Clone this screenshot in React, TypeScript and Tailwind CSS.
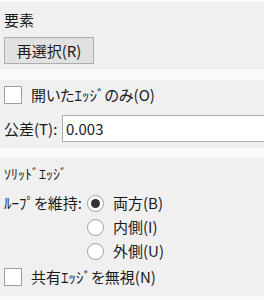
import React, { useState } from 'react';

const font = "font-['Yu_Gothic_UI','Noto_Sans_CJK_JP',sans-serif] [font-feature-settings:'palt']";

function CheckBox({ label, checked, onToggle }: { label: string; checked: boolean; onToggle: () => void }) {
  return (
    <label className="flex h-[20px] items-center cursor-default" onClick={onToggle}>
      <span className="ml-[4px] flex h-[18px] w-[18px] items-center justify-center border border-[#a0a0a0] bg-white">
        {checked && (
          <svg width="12" height="12" viewBox="0 0 12 12">
            <path d="M2 6.5l2.5 2.5L10 3" fill="none" stroke="#333" strokeWidth="1.6" />
          </svg>
        )}
      </span>
      <span className="ml-[9px] whitespace-nowrap text-[15px] leading-[20px] text-[#1a1a1a]">{label}</span>
    </label>
  );
}

function Radio({ label, selected, onSelect }: { label: string; selected: boolean; onSelect: () => void }) {
  return (
    <div className="flex h-[24px] items-center cursor-default" onClick={onSelect}>
      <span className="flex h-[17px] w-[17px] items-center justify-center rounded-full border border-[#a0a0a0] bg-white">
        {selected && <span className="h-[9px] w-[9px] rounded-full bg-[#333333]" />}
      </span>
      <span className="ml-[9px] whitespace-nowrap text-[15px] leading-[20px] text-[#1a1a1a]">{label}</span>
    </div>
  );
}

export default function App() {
  const [openOnly, setOpenOnly] = useState(false);
  const [ignoreShared, setIgnoreShared] = useState(false);
  const [loop, setLoop] = useState('both');
  const [tol, setTol] = useState('0.003');

  return (
    <div className={'h-[300px] w-[264px] overflow-hidden bg-[#fafafa] pt-[2px] ' + font}>
      {/* 要素 */}
      <div className="flex h-[67px] flex-col bg-[#f0f0f0] px-[4px] pt-[8px]">
        <div className="text-[15px] leading-[20px] text-[#1a1a1a]">要素</div>
        <button className="mt-[7px] h-[27px] w-[90px] border border-[#adadad] bg-[#e1e1e1] text-[15px] leading-[20px] text-[#1a1a1a]">
          再選択(R)
        </button>
      </div>

      <div className="mt-[11px] flex h-[68px] flex-col overflow-hidden bg-[#f0f0f0] pt-[5px]">
        <CheckBox label="開いたｴｯｼﾞのみ(O)" checked={openOnly} onToggle={() => setOpenOnly(!openOnly)} />
        <div className="mt-[10px] flex items-center">
          <span className="ml-[4px] w-[58px] shrink-0 whitespace-nowrap text-[15px] leading-[20px] text-[#1a1a1a]">公差(T):</span>
          <input
            value={tol}
            onChange={(e) => setTol(e.target.value)}
            className="h-[27px] w-[220px] shrink-0 border border-[#adadad] bg-white pl-[3px] text-[15px] text-[#1a1a1a] outline-none"
          />
        </div>
      </div>

      <div className="mt-[10px] flex h-[138px] flex-col bg-[#f0f0f0] pt-[5px]">
        <div className="ml-[4px] text-[14px] leading-[20px] text-[#1a1a1a]">ｿﾘｯﾄﾞｴｯｼﾞ</div>
        <div className="mt-[8px] flex">
          <span className="ml-[4px] w-[83px] shrink-0 whitespace-nowrap text-[15px] leading-[24px] text-[#1a1a1a]">ﾙｰﾌﾟを維持:</span>
          <div className="flex flex-col">
            <Radio label="両方(B)" selected={loop === 'both'} onSelect={() => setLoop('both')} />
            <Radio label="内側(I)" selected={loop === 'in'} onSelect={() => setLoop('in')} />
            <Radio label="外側(U)" selected={loop === 'out'} onSelect={() => setLoop('out')} />
          </div>
        </div>
        <div className="mt-[4px]">
          <CheckBox label="共有ｴｯｼﾞを無視(N)" checked={ignoreShared} onToggle={() => setIgnoreShared(!ignoreShared)} />
        </div>
      </div>
    </div>
  );
}
